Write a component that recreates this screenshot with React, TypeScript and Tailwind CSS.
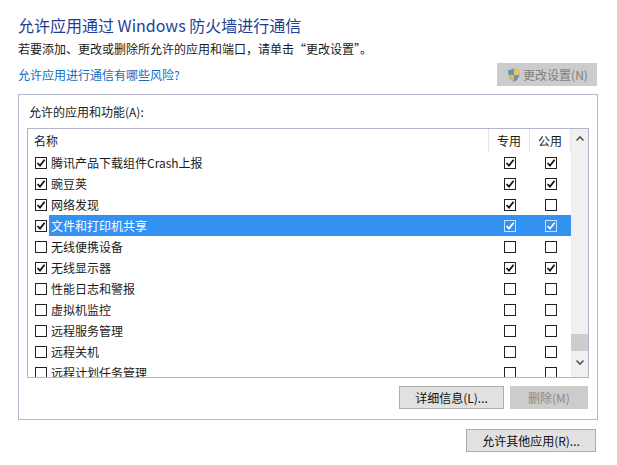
const font = { fontFamily: '"Noto Sans CJK SC", "Liberation Sans", sans-serif' };

const rows: [string, boolean, boolean, boolean][] = [
  ['腾讯产品下载组件Crash上报', true, true, true],
  ['豌豆荚', true, true, true],
  ['网络发现', true, true, false],
  ['文件和打印机共享', true, true, true],
  ['无线便携设备', false, false, false],
  ['无线显示器', true, true, true],
  ['性能日志和警报', false, false, false],
  ['虚拟机监控', false, false, false],
  ['远程服务管理', false, false, false],
  ['远程关机', false, false, false],
  ['远程计划任务管理', false, false, false],
];

function Check({ on, selected }: { on: boolean; selected?: boolean }) {
  return (
    <span
      className={`flex h-[12px] w-[12px] shrink-0 items-center justify-center border ${
        selected ? 'border-[#bfe3ff] bg-[#3d8ee8]' : 'border-[#222] bg-white'
      }`}
    >
      {on && (
        <svg width="10" height="10" viewBox="0 0 10 10">
          <path d="M1.5 5 L4 7.6 L8.6 1.8" fill="none" stroke={selected ? '#ffffff' : '#111'} strokeWidth="1.7" />
        </svg>
      )}
    </span>
  );
}

function Row({ row, selected }: { row: [string, boolean, boolean, boolean]; selected: boolean }) {
  return (
    <div className="flex h-[21px] shrink-0 items-center">
      <div className="flex w-[21px] justify-end pr-[2px]">
        <Check on={row[1]} />
      </div>
      <div className={`flex h-full w-[523px] items-center ${selected ? 'bg-[#3391f2] text-white' : ''}`}>
        <span className="pl-[2px] text-[12px] leading-none">{row[0]}</span>
        <div className="ml-auto flex">
          <div className="flex w-[41px] justify-center">
            <Check on={row[2]} selected={selected} />
          </div>
          <div className="flex w-[41px] justify-center">
            <Check on={row[3]} selected={selected} />
          </div>
        </div>
      </div>
    </div>
  );
}

function Btn({ w, disabled, children }: { w: string; disabled?: boolean; children: string }) {
  return (
    <div
      className={`flex h-[23px] items-center justify-center border text-[12px] ${w} ${
        disabled ? 'border-[#cccccc] bg-[#cccccc] text-[#8a8a8a]' : 'border-[#adadad] bg-[#e1e1e1] text-[#111]'
      }`}
    >
      {children}
    </div>
  );
}

export default function App() {
  return (
    <div className="h-[465px] w-[617px] overflow-hidden bg-white pl-[18px] pt-[15px] text-[#1a1a1a]" style={font}>
      <div className="h-[21px] text-[16px] leading-[21px] text-[#1f3f93]">允许应用通过 Windows 防火墙进行通信</div>
      <div className="mt-[3px] h-[20px] text-[12px] leading-[20px]">若要添加、更改或删除所允许的应用和端口，请单击“更改设置”。</div>
      <div className="mt-[4px] flex h-[30px] items-start justify-between pr-[20px]">
        <span className="mt-[3px] text-[12px] leading-[18px] text-[#0b6fc4]">允许应用进行通信有哪些风险?</span>
        <div className="flex h-[23px] w-[100px] items-center justify-center gap-[1px] bg-[#cccccc] text-[12px] text-[#7f7f7f]">
          <svg width="16" height="16" viewBox="0 0 16 16">
            <path d="M8 1 C10 2.4 12 3 14 3 C14 9 12 13 8 15 C4 13 2 9 2 3 C4 3 6 2.4 8 1Z" fill="#6d93ad" />
            <path d="M8 1 C10 2.4 12 3 14 3 C14 5 13.8 6.6 13.4 8 L8 8Z" fill="#e4c36a" />
            <path d="M8 8 L2.7 8 C3.4 11 5.2 13.6 8 15Z" fill="#dcb95f" />
          </svg>
          <span>更改设置(N)</span>
        </div>
      </div>
      <div className="mt-[1px] h-[326px] w-[580px] border border-[#b8b8d0] pl-[8px] pt-[8px]">
        <div className="h-[18px] pl-[2px] text-[12px] leading-[18px]">允许的应用和功能(A):</div>
        <div className="mt-[7px] flex h-[250px] w-[562px] overflow-hidden border border-[#b4b4cc]">
          <div className="flex min-w-0 flex-1 flex-col overflow-hidden">
            <div className="flex h-[23px] shrink-0 items-center text-[12px]">
              <span className="flex-1 pl-[6px]">名称</span>
              <span className="flex h-full w-[42px] items-center justify-center border-x border-[#e5e5e5]">专用</span>
              <span className="flex h-full w-[41px] items-center justify-center border-r border-[#e5e5e5]">公用</span>
            </div>
            {rows.map((r, i) => (
              <Row key={r[0]} row={r} selected={i === 3} />
            ))}
          </div>
          <div className="flex w-[17px] shrink-0 flex-col items-center bg-[#f0f0f0]">
            <svg className="mt-[5px] shrink-0" width="10" height="10" viewBox="0 0 10 10">
              <path d="M1.5 6.5 L5 3 L8.5 6.5" fill="none" stroke="#555" strokeWidth="1.6" />
            </svg>
            <div className="mt-[190px] h-[17px] w-full shrink-0 bg-[#cdcdcd]" />
            <svg className="mt-[6px] shrink-0" width="10" height="10" viewBox="0 0 10 10">
              <path d="M1.5 3.5 L5 7 L8.5 3.5" fill="none" stroke="#555" strokeWidth="1.6" />
            </svg>
          </div>
        </div>
        <div className="mt-[8px] flex justify-end gap-[6px]" style={{ width: 561 }}>
          <Btn w="w-[105px]">详细信息(L)...</Btn>
          <Btn w="w-[78px]" disabled>删除(M)</Btn>
        </div>
      </div>
      <div className="mt-[9px] flex w-[578px] justify-end">
        <Btn w="w-[130px]">允许其他应用(R)...</Btn>
      </div>
    </div>
  );
}
